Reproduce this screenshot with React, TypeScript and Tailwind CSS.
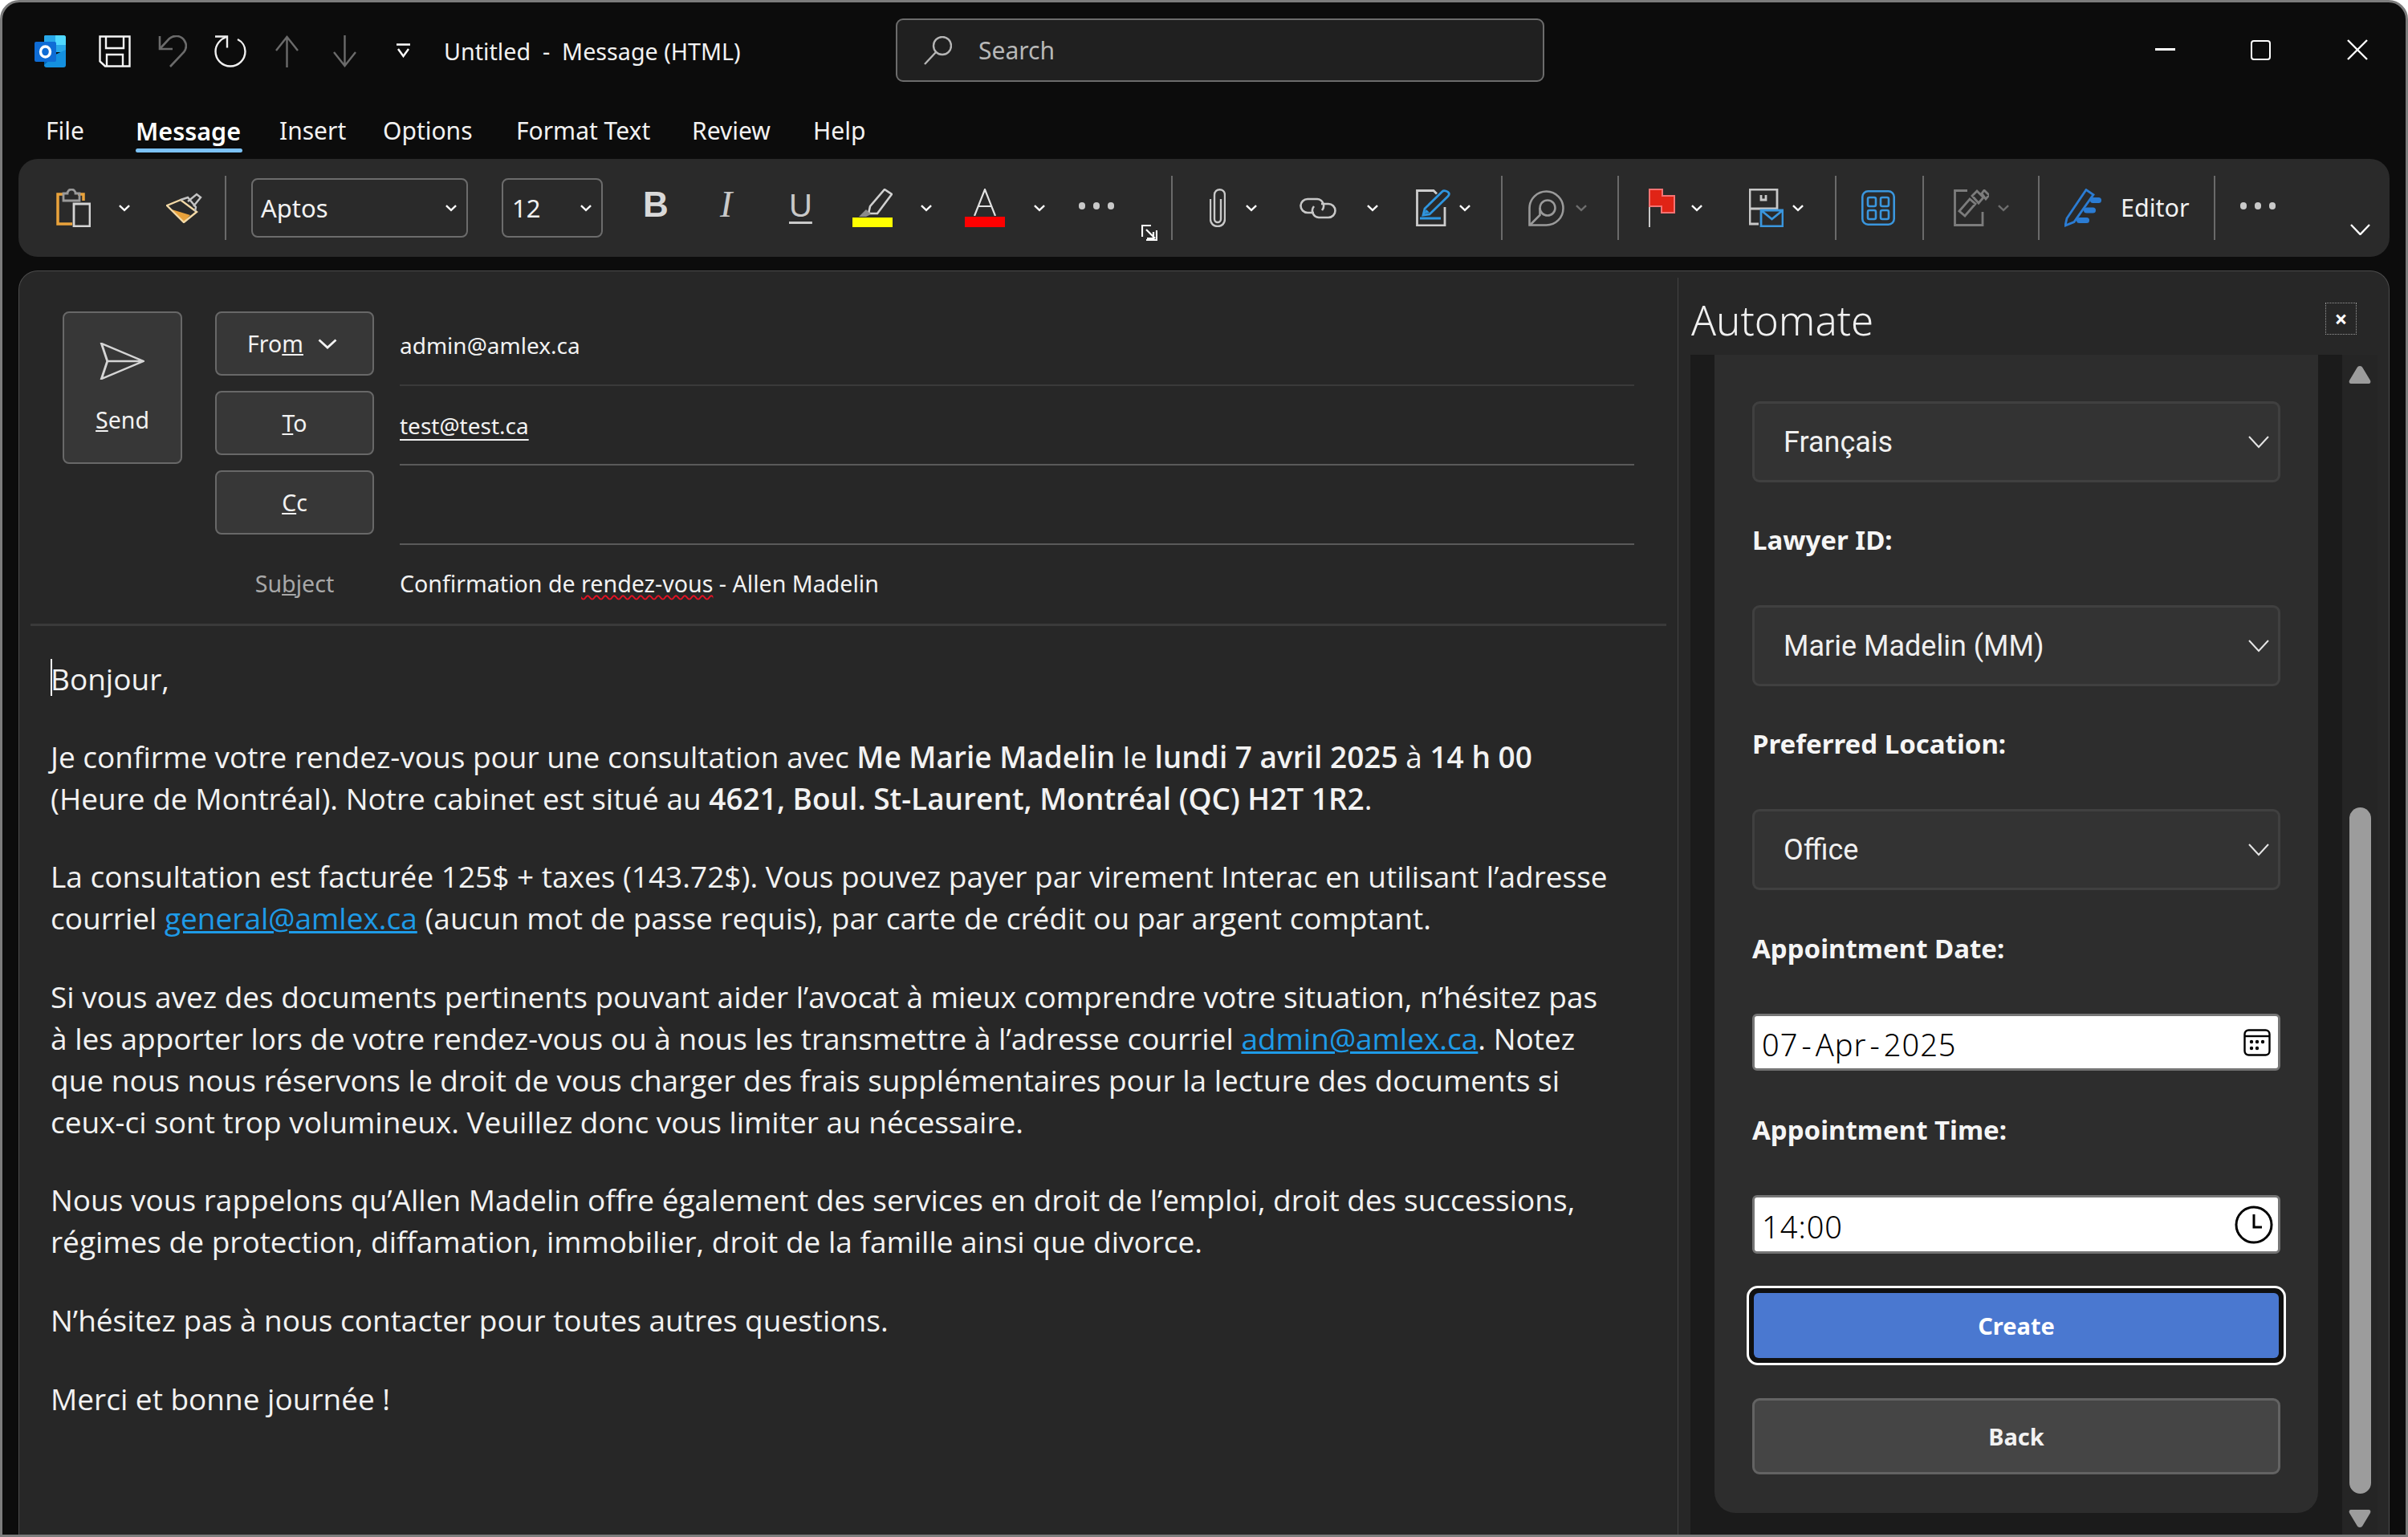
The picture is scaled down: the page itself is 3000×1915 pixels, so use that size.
import { ReactNode } from 'react';

// Small ribbon chevron, dimmed when the command is disabled
function Chev({ className = '', dim = false }: { className?: string; dim?: boolean }) {
  return (
    <svg viewBox="0 0 15 9" className={`w-[14px] h-[9px] shrink-0 ${className}`} fill="none" stroke={dim ? '#6e6e6e' : '#ffffff'} strokeWidth="2.600">
      <path d="M1 1l6.500 6L14 1" />
    </svg>
  );
}

function Sep({ className = '' }: { className?: string }) {
  return <div className={`w-[2px] h-[80px] bg-[#6a6a6a] shrink-0 ${className}`} />;
}

function Dots({ className = '' }: { className?: string }) {
  return (
    <div className={`flex gap-[10px] shrink-0 -mt-[6px] ${className}`}>
      <div className="w-[8px] h-[9px] rounded-full bg-[#c9c9c9]" />
      <div className="w-[8px] h-[9px] rounded-full bg-[#c9c9c9]" />
      <div className="w-[8px] h-[9px] rounded-full bg-[#c9c9c9]" />
    </div>
  );
}

function OutlookLogo() {
  return (
    <svg viewBox="0 0 40 40" className="w-[40px] h-[40px]">
      <path d="M12 1a2 2 0 0 1 2-1h22a3 3 0 0 1 3 3v17H12z" fill="#28a8ea" />
      <path d="M26 0h10a3 3 0 0 1 3 3v9H26z" fill="#50d9ff" />
      <path d="M12 12h14v11H12z" fill="#0078d4" />
      <path d="M26 12h13v9H26z" fill="#28a8ea" />
      <path d="M12 24h14v14H12z" fill="#0364b8" />
      <path d="M26 24l13-6v19a3 3 0 0 1-3 3H15a3 3 0 0 1-3-3z" fill="#1490df" />
      <rect x="0" y="8" width="27" height="25" rx="2" fill="#0f6cd5" />
      <ellipse cx="13.500" cy="20.500" rx="6" ry="6.500" fill="none" stroke="#fff" strokeWidth="3.400" />
    </svg>
  );
}

function TitleIcon({ className, children, w = 40 }: { className?: string; children: ReactNode; w?: number }) {
  return (
    <svg viewBox={`0 0 ${w} 40`} style={{ width: w }} className={`h-[40px] shrink-0 ${className}`} fill="none" strokeWidth="2.400">
      {children}
    </svg>
  );
}

function FormField({ children, className = '' }: { children: ReactNode; className?: string }) {
  return <div className={`flex items-center ${className}`}>{children}</div>;
}

function Select({ value }: { value: string }) {
  return (
    <div className="h-[101px] flex items-center justify-between pl-[36px] pr-[11px] bg-[#333333] border-[3px] border-[#404040] rounded-[9px] text-[36px] text-[#f0f0f0] font-['Roboto',sans-serif]">
      <span>{value}</span>
      <svg viewBox="0 0 26 16" className="w-[26px] h-[16px]" fill="none" stroke="#e6e6e6" strokeWidth="2">
        <path d="M1 1l12 13L25 1" />
      </svg>
    </div>
  );
}

function Label({ children, className = '' }: { children: ReactNode; className?: string }) {
  return <div className={`h-[46px] leading-[46px] font-bold text-[33px] text-[#f5f5f5] ${className}`}>{children}</div>;
}

function HeaderButton({ children }: { children: ReactNode }) {
  return (
    <div className="w-[198px] h-[80px] flex items-center justify-center bg-[#373737] border-[2px] border-[#686868] rounded-[8px] text-[#f2f2f2] text-[28.500px] shrink-0">
      {children}
    </div>
  );
}

export default function App() {
  return (
    <div className="w-[3000px] h-[1915px] flex flex-col bg-[#0c0c0c] border-[3px] border-[#7c7c7c] rounded-tl-[24px] rounded-tr-[24px] overflow-hidden text-white font-['Noto_Sans',sans-serif]">
      {/* Title bar */}
      <div className="h-[122px] flex items-center shrink-0">
        <div className="ml-[40px] w-[40px] shrink-0"><OutlookLogo /></div>
        <TitleIcon className="ml-[40px]">
          <path d="M1.500 1.500h37v37H8l-6.500-6z" stroke="#f5f5f5" />
          <path d="M9 2v14h22V2M10 38V24h20v14" stroke="#f5f5f5" />
        </TitleIcon>
        <TitleIcon className="ml-[34px]" w={36}>
          <path d="M2 1v16h16" stroke="#6b6b6b" strokeWidth="2.600" />
          <path d="M2 17L14 4c6-5 15-4 19 3 3 5 2 10-1 14L15 39" stroke="#6b6b6b" strokeWidth="2.600" />
        </TitleIcon>
        <TitleIcon className="ml-[34px]">
          <path d="M1 1.500h15v14" stroke="#f0f0f0" />
          <path d="M15 2C7 5 1.500 12 1.500 20a18.500 18.500 0 0 0 37 0C38.500 14 35 8 29 5" stroke="#f0f0f0" />
        </TitleIcon>
        <TitleIcon className="ml-[36px]" w={29}>
          <path d="M14.500 40V2M1 19L14.500 2 28 19" stroke="#6b6b6b" />
        </TitleIcon>
        <TitleIcon className="ml-[43px]" w={29}>
          <path d="M14.500 0v38M1 21l13.500 17L28 21" stroke="#6b6b6b" />
        </TitleIcon>
        <svg viewBox="0 0 17 18" className="ml-[50px] w-[17px] h-[18px] shrink-0 -mt-[2px]" fill="none" stroke="#ffffff" strokeWidth="2.400">
          <path d="M0 1.500h17M2 7l6.500 9L15 7" />
        </svg>
        <div className="ml-[42px] w-[500px] text-[28.700px] text-[#f2f2f2] whitespace-pre">Untitled  -  Message (HTML)</div>
        <div className="ml-[63px] w-[808px] h-[79px] -mt-[3px] flex items-center bg-[#202020] border-[2px] border-[#6c6c6c] rounded-[9px] shrink-0">
          <svg viewBox="0 0 35 36" className="ml-[33px] w-[35px] h-[36px]" fill="none" stroke="#b5b5b5" strokeWidth="2.400">
            <circle cx="23" cy="12" r="11" />
            <path d="M15 20L1 35" />
          </svg>
          <span className="ml-[33px] text-[30px] text-[#b8b8b8]">Search</span>
        </div>
        <div className="ml-[761px] w-[25px] h-[3px] bg-white shrink-0 -mt-[6px]" />
        <div className="ml-[94px] w-[25px] h-[25px] border-[2.500px] border-white rounded-[4px] shrink-0 -mt-[4px]" />
        <svg viewBox="0 0 26 26" className="ml-[95px] w-[26px] h-[26px] shrink-0 -mt-[4px]" fill="none" stroke="#ffffff" strokeWidth="2.400">
          <path d="M1 1l24 24M25 1L1 25" />
        </svg>
      </div>

      {/* Tabs */}
      <div className="h-[73px] flex shrink-0 items-start pt-[16px] text-[30px] leading-[44px] text-[#f2f2f2]">
        <div className="ml-[54px] w-[65px]">File</div>
        <div className="ml-[47px] relative h-[57px] w-[133px] text-[30.500px] font-semibold text-white">
          Message
          <div className="absolute left-0 right-0 top-[44px] h-[5px] rounded-[3px] bg-[#7cc2f8]" />
        </div>
        <div className="ml-[46px] w-[84px]">Insert</div>
        <div className="ml-[45px] w-[120px]">Options</div>
        <div className="ml-[46px] w-[175px]">Format Text</div>
        <div className="ml-[44px] w-[105px]">Review</div>
        <div className="ml-[46px]">Help</div>
      </div>

      {/* Ribbon */}
      <div className="ml-[20px] w-[2954px] h-[122px] shrink-0 flex items-center bg-[#2a2a2a] rounded-[24px]">
        <svg viewBox="0 0 43 48" className="ml-[47px] w-[43px] h-[48px] shrink-0" fill="none" strokeWidth="2.800">
          <path d="M9 7H2v37h18M27 7h7v8" stroke="#e9a23b" strokeWidth="3.500" />
          <path d="M9 15V6h5a5 5 0 0 1 10 0h5v9z" stroke="#9a9a9a" />
          <path d="M22 19h20v28H22z" stroke="#d4d4d4" />
        </svg>
        <Chev className="ml-[35px]" />
        <svg viewBox="0 0 45 38" className="ml-[45px] w-[45px] h-[38px] shrink-0" fill="none" strokeWidth="2.400">
          <path d="M7 21l23 7-8 9z" fill="#e9a23b" stroke="none" />
          <path d="M1 16l17-7 20 15-16 13z" stroke="#f3d9a6" />
          <path d="M18 9l9-3 10 12-1 5M27 11L38 2l5 4-9 11" stroke="#c4c4c4" />
        </svg>
        <Sep className="ml-[28px]" />
        <div className="ml-[31px] w-[270px] h-[74px] shrink-0 flex items-center justify-between pl-[10px] pr-[12px] border-[2px] border-[#6c6c6c] rounded-[8px] text-[31px] text-[#f2f2f2]">
          Aptos
          <Chev />
        </div>
        <div className="ml-[42px] w-[126px] h-[74px] shrink-0 flex items-center justify-between pl-[11px] pr-[12px] border-[2px] border-[#6c6c6c] rounded-[8px] text-[31px] text-[#f2f2f2]">
          12
          <Chev />
        </div>
        <div className="ml-[50px] w-[28px] text-[44px] font-bold leading-none text-[#d9d9d9] font-['Liberation_Sans',sans-serif] -mt-[8px]">B</div>
        <div className="ml-[68px] w-[20px] text-[46px] italic leading-none text-[#c9c9c9] font-['Liberation_Serif',serif] -mt-[8px]">I</div>
        <div className="ml-[66px] w-[30px] text-[40px] leading-none text-[#c9c9c9] underline underline-offset-[6px] decoration-[3px] font-['Liberation_Sans',sans-serif] -mt-[6px]">U</div>
        <svg viewBox="0 0 50 48" className="ml-[49px] w-[50px] h-[48px] shrink-0" fill="none" strokeWidth="2.600">
          <path d="M40 1l9 6-18 24H20l2-9z" stroke="#d0d0d0" />
          <path d="M17 26l6 6-6 3H8z" fill="#8a8a8a" />
          <rect x="0" y="36" width="50" height="12" fill="#ffff00" />
        </svg>
        <Chev className="ml-[35px]" />
        <div className="ml-[41px] w-[50px] h-[48px] shrink-0 flex flex-col items-center justify-between">
          <svg viewBox="0 0 28 34" className="w-[28px] h-[34px]" fill="none" stroke="#e2e2e2" strokeWidth="2.200">
            <path d="M1 34L14 1l13 33M6 22h16" />
          </svg>
          <div className="w-full h-[13px] bg-[#ff0000]" />
        </div>
        <Chev className="ml-[36px]" />
        <Dots className="ml-[42px]" />
        <svg viewBox="0 0 20 20" className="ml-[34px] w-[20px] h-[20px] shrink-0 self-end mb-[20px]" fill="none" stroke="#ffffff" strokeWidth="2.200">
          <path d="M12 1H1v14M19 7v12H6M6 6l11 11M15 9v8H7" />
        </svg>
        <Sep className="ml-[17px]" />
        <svg viewBox="0 0 20 48" className="ml-[46px] w-[20px] h-[48px] shrink-0" fill="none" stroke="#c8c8c8" strokeWidth="2.400">
          <path d="M14 13v25a4 4 0 0 1-8 0V8c0-9 13-9 13 0v30c0 12-18 12-18 0V13" />
        </svg>
        <Chev className="ml-[25px]" />
        <svg viewBox="0 0 46 28" className="ml-[53px] w-[46px] h-[28px] shrink-0" fill="none" stroke="#c8c8c8" strokeWidth="2.600">
          <path d="M18 20h-8a8.500 8.500 0 0 1 0-17h12a8.500 8.500 0 0 1 6 14" />
          <path d="M27 9h9a8.500 8.500 0 0 1 0 17H24a8.500 8.500 0 0 1-6-14" />
        </svg>
        <Chev className="ml-[38px]" />
        <svg viewBox="0 0 44 46" className="ml-[47px] w-[44px] h-[46px] shrink-0" fill="none" strokeWidth="2.800">
          <path d="M1.500 38V1.500H22l4 4M36 22v23H1.500v-8" stroke="#cccccc" />
          <path d="M9 32l2-8L33 2.500c2-2 7 0 8 2 1 2 0 3-1 4L17 31z" stroke="#2f96e0" />
          <path d="M10 30l3-5 4 4z" fill="#2f96e0" />
          <path d="M5 36h26" stroke="#2f96e0" strokeWidth="3" />
        </svg>
        <Chev className="ml-[10px]" />
        <Sep className="ml-[38px]" />
        <svg viewBox="0 0 45 45" className="ml-[32px] w-[45px] h-[45px] shrink-0" fill="none" stroke="#9a9a9a" strokeWidth="2.600">
          <path d="M1.500 43.500V22a21 21 0 1 1 21 21.500z" />
          <circle cx="24" cy="22" r="9.500" />
          <path d="M14.500 22v9L2 43.500" />
        </svg>
        <Chev className="ml-[14px]" dim />
        <Sep className="ml-[38px]" />
        <svg viewBox="0 0 33 48" className="ml-[37px] w-[33px] h-[48px] shrink-0" strokeWidth="2">
          <path d="M1 0v48" stroke="#c8c8c8" fill="none" />
          <path d="M1 1h16v8h15v21H16v-8H1z" fill="#e02416" stroke="#f47272" />
        </svg>
        <Chev className="ml-[20px]" />
        <svg viewBox="0 0 43 48" className="ml-[58px] w-[43px] h-[48px] shrink-0" fill="none" strokeWidth="2.800">
          <path d="M12 44H1V1h34v24H1" stroke="#c8c8c8" />
          <path d="M15 8v6h6V8" stroke="#c8c8c8" />
          <path d="M15 27h27v20H15zM15 27l13.500 11L42 27" stroke="#3a96dd" />
        </svg>
        <Chev className="ml-[11px]" />
        <Sep className="ml-[39px]" />
        <svg viewBox="0 0 42 44" className="ml-[31px] w-[42px] h-[44px] shrink-0" fill="none" stroke="#3a96dd" strokeWidth="2.600">
          <rect x="1.300" y="1.300" width="39.400" height="41.400" rx="7" />
          <rect x="8" y="9" width="10" height="11" rx="2" />
          <rect x="24" y="9" width="10" height="11" rx="2" />
          <rect x="8" y="25" width="10" height="11" rx="2" />
          <rect x="24" y="25" width="10" height="11" rx="2" />
        </svg>
        <Sep className="ml-[34px]" />
        <svg viewBox="0 0 44 46" className="ml-[37px] w-[44px] h-[46px] shrink-0" fill="none" stroke="#7c7c7c" strokeWidth="2.800">
          <path d="M17 1.500H1.500v43H36V28" />
          <path d="M7 27l13-15 7 6-13 15zM23 8l6-6 8 8-6 7zM35 5l3-4 6 6-4 5z" />
        </svg>
        <Chev className="ml-[11px]" dim />
        <Sep className="ml-[36px]" />
        <svg viewBox="0 0 46 48" className="ml-[31px] w-[46px] h-[48px] shrink-0">
          <path d="M1 46l2-9L27 1.500l9 6-24 34z" fill="none" stroke="#2b7cd3" strokeWidth="2.800" />
          <rect x="32" y="11" width="14" height="7" rx="3.500" fill="#2b7cd3" />
          <rect x="24" y="23.500" width="15" height="7" rx="3.500" fill="#2b7cd3" />
          <rect x="15" y="36" width="16" height="7" rx="3.500" fill="#2b7cd3" />
        </svg>
        <div className="ml-[24px] w-[83px] text-[30.500px] text-[#f2f2f2] shrink-0">Editor</div>
        <Sep className="ml-[33px]" />
        <Dots className="ml-[31px]" />
        <svg viewBox="0 0 25 14" className="ml-[93px] w-[25px] h-[14px] shrink-0 self-end mb-[27px]" fill="none" stroke="#ffffff" strokeWidth="2.400">
          <path d="M1 1l11.500 12L24 1" />
        </svg>
      </div>

      {/* Main area */}
      <div className="mt-[17px] ml-[20px] w-[2954px] flex-1 min-h-0 flex bg-[#272727] border-t-[1px] border-x-[1px] border-[#4c4c4c] rounded-t-[24px] overflow-hidden">
        {/* Compose */}
        <div className="w-[2066px] shrink-0">
          <div className="mx-[14px] h-[442px] border-b-[3px] border-[#3a3a3a] flex items-start pt-[50px] pl-[40px]">
            <div className="w-[149px] h-[190px] flex flex-col items-center pt-[37px] gap-[32px] bg-[#373737] border-[2px] border-[#686868] rounded-[8px] shrink-0">
              <svg viewBox="0 0 46 46" className="w-[56px] h-[46px] mr-[2px]" preserveAspectRatio="none" fill="none" stroke="#d5d5d5" strokeWidth="2.400">
                <path d="M2 1l43 22L2 45l6-22zM8 23h37" />
              </svg>
              <div className="text-[28.500px] leading-[36px] text-[#f2f2f2]"><span className="underline">S</span>end</div>
            </div>
            <div className="ml-[41px] w-[1768px]">
              <div className="flex items-start h-[99px]">
                <HeaderButton>
                  <span className="-ml-[6px]">Fro<span className="underline">m</span></span>
                  <svg viewBox="0 0 24 13" className="ml-[18px] w-[24px] h-[13px]" fill="none" stroke="#f2f2f2" strokeWidth="2.800">
                    <path d="M1.500 1.500l10.500 9.500 10.500-9.500" />
                  </svg>
                </HeaderButton>
                <div className="ml-[32px] w-[1539px] h-[93px] border-b-[2px] border-[#3a3a3a] text-[28px] leading-[84px] text-[#f2f2f2]">admin@amlex.ca</div>
              </div>
              <div className="flex items-start h-[99px]">
                <HeaderButton><span><span className="underline">T</span>o</span></HeaderButton>
                <div className="ml-[32px] w-[1539px] h-[93px] border-b-[2px] border-[#5a5a5a] text-[28px] leading-[86px] text-[#f2f2f2]"><span className="underline underline-offset-[6px]">test@test.ca</span></div>
              </div>
              <div className="flex items-start h-[99px]">
                <HeaderButton><span><span className="underline">C</span>c</span></HeaderButton>
                <div className="ml-[32px] w-[1539px] h-[93px] border-b-[2px] border-[#5a5a5a]" />
              </div>
              <div className="flex items-center h-[86px] text-[28.600px] -mt-[1px]">
                <div className="w-[198px] text-center text-[#a8a8a8]">Su<span className="underline">b</span>ject</div>
                <div className="ml-[32px] text-[#f2f2f2]">
                  Confirmation de <span className="underline decoration-wavy decoration-[#e81123] decoration-2 underline-offset-[3px]">rendez-vous</span> - Allen Madelin
                </div>
              </div>
            </div>
          </div>
          <div className="pl-[39px] pr-[10px] pt-[40px] text-[37px] leading-[52px] text-[#f2f2f2] font-['Open_Sans',sans-serif] whitespace-nowrap">
            <p className="relative">
              <span className="absolute left-0 top-[1px] w-[2px] h-[46px] bg-white" />
              Bonjour,
            </p>
            <p className="mt-[45px]">Je confirme votre rendez-vous pour une consultation avec <b className="font-semibold">Me Marie Madelin</b> le <b className="font-semibold">lundi 7 avril 2025</b> à <b className="font-semibold">14 h 00</b><br />(Heure de Montréal). Notre cabinet est situé au <b className="font-semibold">4621, Boul. St-Laurent, Montréal (QC) H2T 1R2</b>.</p>
            <p className="mt-[45px]">La consultation est facturée 125$ + taxes (143.72$). Vous pouvez payer par virement Interac en utilisant l’adresse<br />courriel <span className="text-[#1e9be8] underline">general@amlex.ca</span> (aucun mot de passe requis), par carte de crédit ou par argent comptant.</p>
            <p className="mt-[46px]">Si vous avez des documents pertinents pouvant aider l’avocat à mieux comprendre votre situation, n’hésitez pas<br />à les apporter lors de votre rendez-vous ou à nous les transmettre à l’adresse courriel <span className="text-[#1e9be8] underline">admin@amlex.ca</span>. Notez<br />que nous nous réservons le droit de vous charger des frais supplémentaires pour la lecture des documents si<br />ceux-ci sont trop volumineux. Veuillez donc vous limiter au nécessaire.</p>
            <p className="mt-[45px]">Nous vous rappelons qu’Allen Madelin offre également des services en droit de l’emploi, droit des successions,<br />régimes de protection, diffamation, immobilier, droit de la famille ainsi que divorce.</p>
            <p className="mt-[46px]">N’hésitez pas à nous contacter pour toutes autres questions.</p>
            <p className="mt-[46px]">Merci et bonne journée !</p>
          </div>
        </div>

        {/* Automate task pane */}
        <div className="flex-1 min-w-0 flex flex-col border-l-[1px] border-[#444444] mt-[8px]">
          <div className="h-[96px] shrink-0 flex items-start justify-between">
            <div className="ml-[16px] mt-[20px] text-[51px] leading-[64px] font-light text-[#f0f0f0]">Automate</div>
            <div className="mr-[40px] mt-[31px] w-[39px] h-[40px] flex items-center justify-center border-[1px] border-dotted border-[#9a9a9a] text-[28px] leading-none font-bold text-white">×</div>
          </div>
          <div className="ml-[15px] mr-[15px] flex-1 min-h-0 flex bg-[#1b1b1b]">
            <div className="ml-[30px] w-[752px] h-[1443px] shrink-0 bg-[#2d2d2d] rounded-b-[26px] pt-[58px] px-[47px]">
              <Select value="Français" />
              <Label className="mt-[49px] mb-[58px]">Lawyer ID:</Label>
              <Select value="Marie Madelin (MM)" />
              <Label className="mt-[49px] mb-[58px]">Preferred Location:</Label>
              <Select value="Office" />
              <Label className="mt-[50px] mb-[58px]">Appointment Date:</Label>
              <FormField className="h-[71px] justify-between bg-white border-[3px] border-[#757575] rounded-[6px] pl-[9px] pr-[9px] text-black text-[38px] font-light">
                <span className="pt-[6px] tracking-[1px]">07<span className="mx-[4px]">-</span>Apr<span className="mx-[4px]">-</span>2025</span>
                <svg viewBox="0 0 34 34" className="w-[34px] h-[34px]" fill="none" stroke="#000000" strokeWidth="2.400">
                  <rect x="1.500" y="1.500" width="31" height="31" rx="5" />
                  <path d="M2 9h30" />
                  <g fill="#000000" stroke="none">
                    <circle cx="10" cy="16" r="2.200" /><circle cx="17" cy="16" r="2.200" /><circle cx="24" cy="16" r="2.200" />
                    <circle cx="10" cy="24" r="2.200" /><circle cx="17" cy="24" r="2.200" />
                  </g>
                </svg>
              </FormField>
              <Label className="mt-[51px] mb-[58px]">Appointment Time:</Label>
              <FormField className="h-[73px] justify-between bg-white border-[3px] border-[#757575] rounded-[6px] pl-[9px] pr-[6px] text-black text-[38px] font-light">
                <span className="pt-[6px] tracking-[1px]">14:00</span>
                <svg viewBox="0 0 48 48" className="w-[48px] h-[48px]" fill="none" stroke="#000000" strokeWidth="3">
                  <circle cx="24" cy="24" r="22" />
                  <path d="M24 11v16h10" />
                </svg>
              </FormField>
              <div className="mt-[40px] -mx-[7px] h-[99px] border-[3px] border-white rounded-[14px] bg-[#101010] p-[6px]">
                <div className="h-full flex items-center justify-center rounded-[6px] bg-[#4a78d0] text-[29px] font-bold text-white">Create</div>
              </div>
              <div className="mt-[41px] h-[95px] flex items-center justify-center bg-[#454545] border-[3px] border-[#636363] rounded-[9px] text-[29px] font-bold text-[#f2f2f2]">Back</div>
            </div>
            <div className="ml-[30px] w-[44px] shrink-0 bg-[#252525] flex flex-col items-center pt-[14px] pb-[12px]">
              <svg viewBox="0 0 28 22" className="w-[28px] h-[22px] shrink-0" fill="#9c9c9c">
                <path d="M14 0c2 0 3 1 4 3l9 15c1 2 0 4-2 4H3c-2 0-3-2-2-4l9-15c1-2 2-3 4-3z" />
              </svg>
              <div className="mt-[528px] w-[27px] h-[855px] shrink-0 rounded-full bg-[#9c9c9c]" />
              <svg viewBox="0 0 28 22" className="mt-[20px] w-[28px] h-[22px] shrink-0" fill="#9c9c9c">
                <path d="M14 22c2 0 3-1 4-3l9-15c1-2 0-4-2-4H3C1 0 0 2 1 4l9 15c1 2 2 3 4 3z" />
              </svg>
            </div>
          </div>
        </div>
      </div>
    </div>
  );
}
